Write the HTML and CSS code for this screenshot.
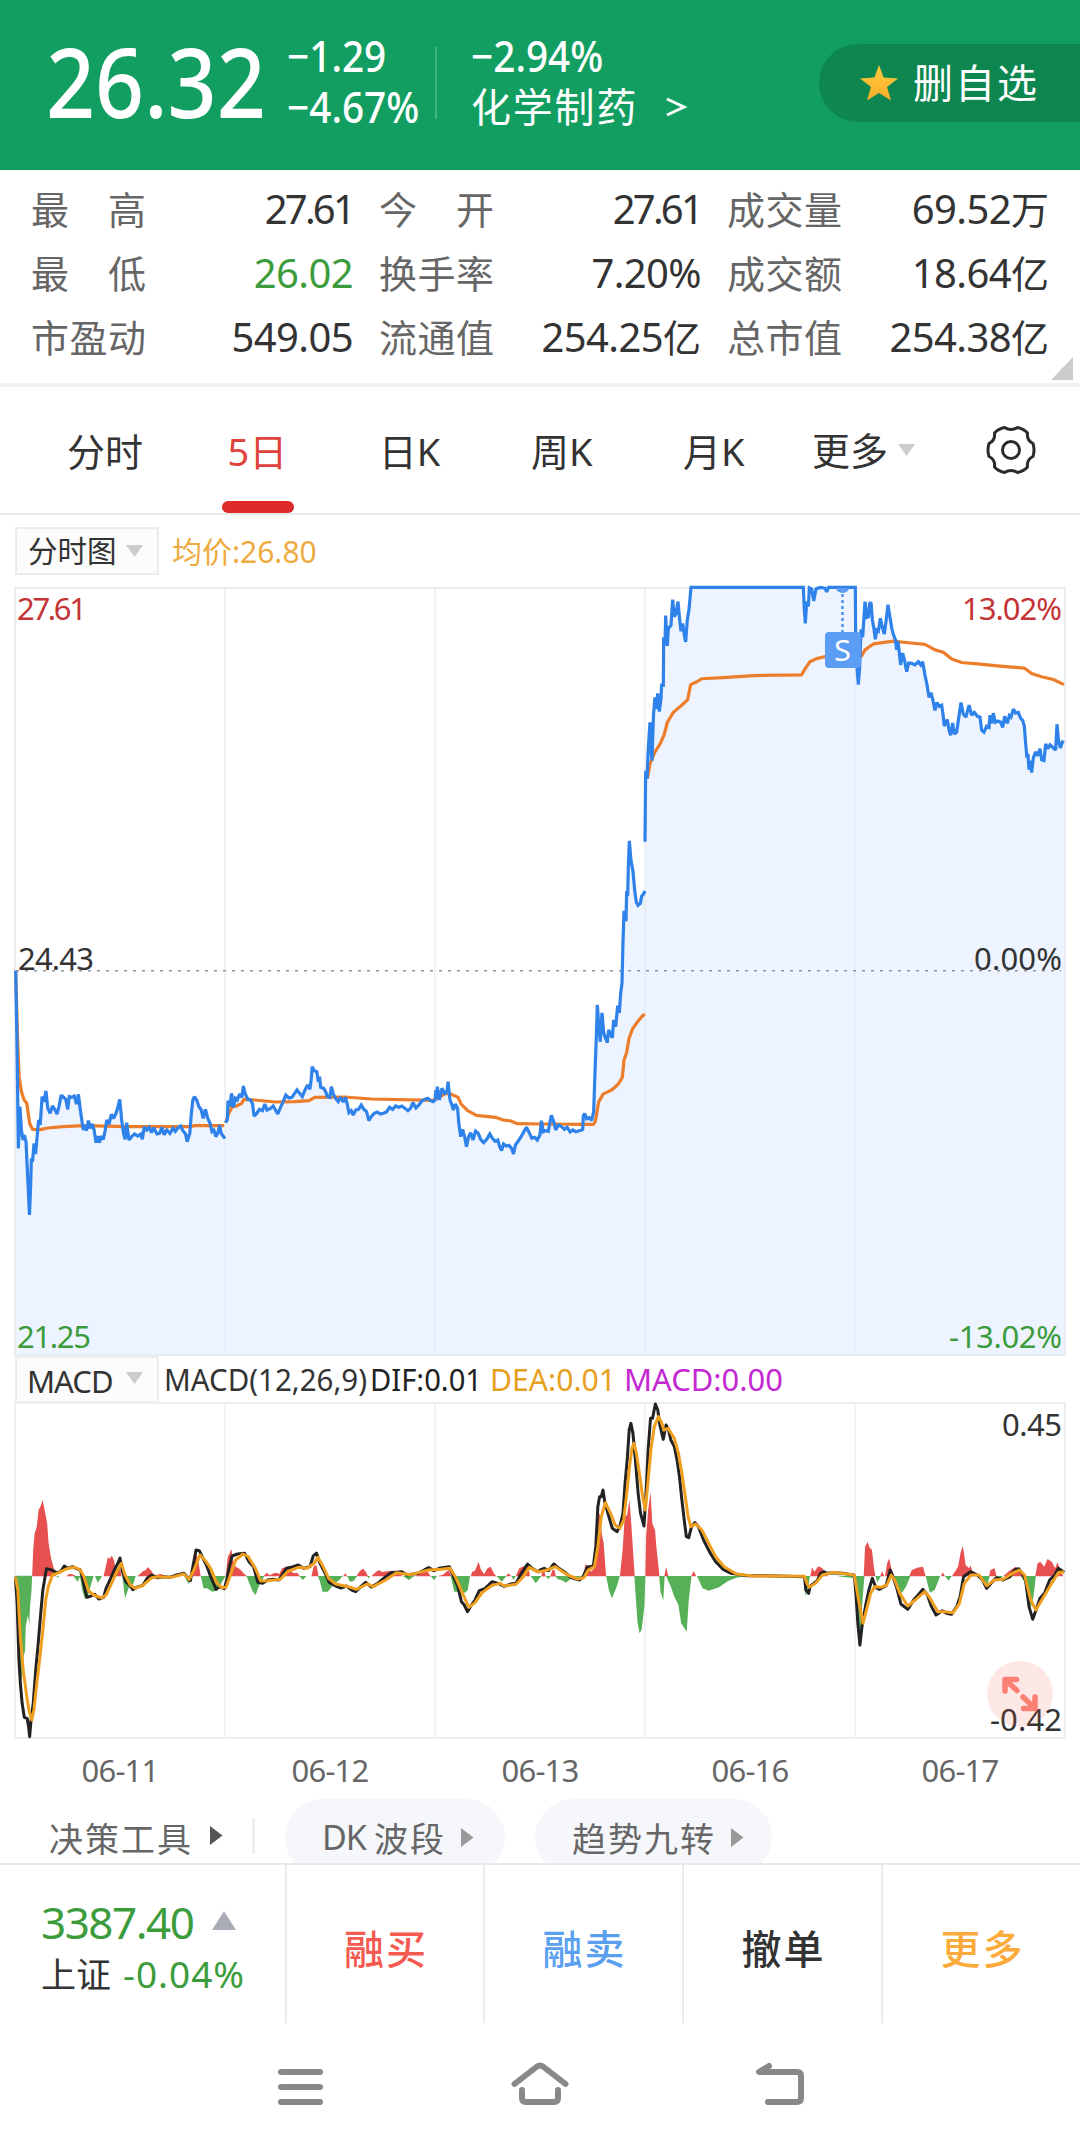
FILE: index.html
```html
<!DOCTYPE html>
<html lang="zh-CN">
<head>
<meta charset="utf-8">
<title>化学制药 5日</title>
<link rel="stylesheet" href="styles.css">
</head>
<body>
<header class="quote">
  <div class="price"><span>26.32</span></div>
  <div class="pair change"><span class="num">−1.29</span><span class="num">−4.67%</span></div>
  <div class="rule"></div>
  <div class="pair sector"><span class="num">−2.94%</span><span class="sector-name">化学制药<svg class="chevron" width="24" height="26" viewBox="0 0 24 26"><path d="M3 5L20 13L3 21" fill="none" stroke="#fff" stroke-width="3"/></svg></span></div>
  <button class="fav"><svg width="40" height="38" viewBox="0 0 40 38"><defs><linearGradient id="gold" x1="0" y1="0" x2="0" y2="1"><stop offset="0" stop-color="#ffcd3d"/><stop offset="1" stop-color="#fbab2c"/></linearGradient></defs><path fill="url(#gold)" d="M20 1L24.6 13.6L39 14.5L28 23L32 36.5L20 29L8 36.5L12 23L1 14.5L15.4 13.6Z"/></svg><span>删自选</span></button>
</header>

<section class="stats">
  <div class="stat"><span class="k"><i>最</i><i>高</i></span><span class="v tight">27.61</span></div>
  <div class="stat"><span class="k"><i>今</i><i>开</i></span><span class="v tight">27.61</span></div>
  <div class="stat"><span class="k"><i>成</i><i>交</i><i>量</i></span><span class="v">69.52<b>万</b></span></div>
  <div class="stat"><span class="k"><i>最</i><i>低</i></span><span class="v down">26.02</span></div>
  <div class="stat"><span class="k"><i>换</i><i>手</i><i>率</i></span><span class="v">7.20%</span></div>
  <div class="stat"><span class="k"><i>成</i><i>交</i><i>额</i></span><span class="v">18.64<b>亿</b></span></div>
  <div class="stat"><span class="k"><i>市</i><i>盈</i><i>动</i></span><span class="v">549.05</span></div>
  <div class="stat"><span class="k"><i>流</i><i>通</i><i>值</i></span><span class="v">254.25<b>亿</b></span></div>
  <div class="stat"><span class="k"><i>总</i><i>市</i><i>值</i></span><span class="v">254.38<b>亿</b></span></div>
  <svg class="corner" width="23" height="23" viewBox="0 0 23 23"><path d="M22 0V23H0Z" fill="#ccc"/></svg>
</section>

<nav class="tabs">
  <a>分时</a><a class="on">5日</a><a>日K</a><a>周K</a><a>月K</a>
  <a class="more">更多<svg width="17" height="12" viewBox="0 0 17 12"><path d="M0 0H17L8.500 12Z" fill="#ccc"/></svg></a>
  <svg class="gear" width="52" height="52" viewBox="-26 -26 52 52" fill="none" stroke="#2b2b2b" stroke-width="3"><circle r="8.500"/><path stroke-linejoin="round" d="M-6.500 -22.500Q0 -18.500 6.500 -22.500Q13 -21 16.500 -17Q15.500 -9.500 22 -6.500Q24 0 22 6.500Q15.500 9.500 16.500 17Q13 21 6.500 22.500Q0 18.500 -6.500 22.500Q-13 21 -16.500 17Q-15.500 9.500 -22 6.500Q-24 0 -22 -6.500Q-15.500 -9.500 -16.500 -17Q-13 -21 -6.500 -22.500Z"/></svg>
</nav>

<div class="legend">
  <span class="select">分时图<svg width="17" height="12" viewBox="0 0 17 12"><path d="M0 0H17L8.500 12Z" fill="#ccc"/></svg></span>
  <span class="avg">均价:26.80</span>
</div>

<svg class="chart" width="1080" height="769" viewBox="0 587 1080 769">
  <g fill="#edf4ff">
    <path transform="translate(0 900) scale(.38265 .33333)" d="M41 1365L41 212L44 400L48 745L52 620L56 690L60 720L64 705L68 725L71 800L74 870L77 945L80 860L82 775L85 785L89 730L93 762L97 710L101 660L105 675L110 590L120 573L125 625L131 640L143 628L149 642L160 585L172 598L177 628L181 590L194 588L200 612L205 583L210 630L218 690L231 662L246 690L251 728L270 718L279 660L291 643L303 640L313 598L323 700L327 718L331 668L337 720L352 702L372 718L377 680L396 698L410 702L423 682L444 700L472 678L489 725L496 700L504 600L508 590L520 620L531 655L537 628L549 670L564 710L574 675L588 716L589 668L594 660L596 602L605 580L610 622L620 600L636 558L648 598L660 612L664 648L678 628L692 612L714 618L726 642L747 585L763 592L776 570L790 590L804 555L810 568L816 500L828 515L838 562L851 575L862 592L866 560L877 595L903 592L912 638L923 645L944 615L958 635L964 662L986 636L1010 636L1034 618L1066 632L1079 608L1111 598L1137 600L1143 560L1148 600L1155 565L1168 575L1171 545L1176 600L1185 630L1196 625L1204 710L1219 740L1230 698L1243 693L1264 728L1280 702L1301 720L1311 752L1330 736L1342 762L1355 722L1376 682L1390 715L1411 705L1415 662L1426 692L1441 646L1452 690L1490 696L1524 690V1365Z"/>
    <path transform="translate(560 570) scale(.33333 .39541)" d="M62 1985V1417L68 1415L74 1375L95 1392L101 1370L109 1180L112 1100L121 1193L126 1120L131 1170L142 1195L157 1183L161 1138L173 1102L186 1045L192 862L198 888L208 685L219 762L229 840L241 843L255 812V687L257 508L261 528L270 385L276 482L281 360L293 312L303 325L310 295L311 170L317 115L322 192L325 148L333 140L338 75L343 118L354 80L363 155L377 182L387 100L393 43H730L736 135L740 80L748 45L761 78L768 48H886L887 160L895 290L903 150L908 170L915 80L933 82L946 175L961 122L973 162L984 88L1002 168L1014 180L1022 240L1088 232L1107 322L1125 355L1145 342L1153 395L1172 418L1190 410L1203 335L1218 372L1227 342L1260 372L1272 410L1290 367L1328 398L1360 352L1388 380L1397 440L1407 505L1415 512L1427 460L1445 480L1457 440L1487 455L1491 390L1501 450L1515 437V1985Z"/>
  </g>
  <g stroke="#e3e6ec" stroke-opacity=".7" fill="none">
    <path d="M225 588V1355M435 588V1355M645 588V1355M855 588V1355" stroke-width="1.500"/>
    <path d="M15 588H1065V1355H15Z" stroke-width="2"/>
  </g>
  <path d="M16 970.700H1061" stroke="#8f959c" stroke-width="1.600" stroke-dasharray="3 6"/>
  <g fill="none" stroke-linejoin="round" stroke-width="3.200">
    <g stroke="#ec7d2a">
      <path vector-effect="non-scaling-stroke" transform="translate(0 900) scale(.38265 .33333)" d="M41 212L46 420L50 530L56 575L63 600L70 610L75 650L78 672L85 688L105 689L125 684L165 680L220 677L330 680L495 680L510 677L586 677M590 668L598 640L606 622L618 618L632 610L637 598L665 600L720 606L770 605L808 602L822 592L900 591L970 597L1137 601M1139 598L1150 590L1165 580L1178 582L1197 592L1205 612L1222 632L1245 646L1295 652L1315 660L1335 663L1352 671L1420 672L1524 673"/>
      <path vector-effect="non-scaling-stroke" transform="translate(560 570) scale(.33333 .39541)" d="M60 1402L100 1402L106 1395L112 1365L116 1345L130 1325L155 1315L175 1300L187 1283L192 1240L200 1220L207 1185L218 1160L235 1140L248 1127L255 1124M262 528L270 490L285 460L300 440L312 418L322 385L340 360L365 342L383 328L392 290L412 282L425 275L490 272L580 267L725 265L735 250L750 232L770 224L800 218M903 220L915 202L940 187L1000 180L1045 184L1095 188L1125 202L1150 208L1175 225L1205 234L1260 238L1320 243L1393 248L1415 262L1445 270L1480 277L1512 290"/>
    </g>
    <g stroke="#2f82ea" stroke-linejoin="miter" stroke-miterlimit="2">
      <path vector-effect="non-scaling-stroke" transform="translate(0 900) scale(.38265 .33333)" d="M41 212L44 400L48 745L52 620L56 690L60 720L64 705L68 725L71 800L74 870L77 945L80 860L82 775L85 785L89 730L93 762L97 710L101 660L105 675L110 590L115 605L120 573L125 625L131 640L137 618L143 628L149 642L154 620L160 585L166 592L172 598L177 628L181 590L187 592L194 588L200 612L205 583L210 630L215 670L218 690L222 675L226 692L231 662L236 685L241 672L246 690L251 728L256 708L260 728L265 708L270 718L275 690L279 660L285 673L291 643L297 655L303 640L308 622L313 598L318 660L323 700L327 718L331 668L337 720L344 710L352 702L360 708L368 702L372 718L377 680L384 690L390 682L396 698L402 683L410 702L417 700L423 682L429 704L436 690L444 700L452 685L458 694L465 684L472 678L478 692L485 702L489 725L496 700L500 640L504 600L508 590L514 600L520 620L526 630L531 655L537 628L543 655L549 670L554 695L559 690L564 710L569 700L574 675L578 700L583 708L588 716M589 668L594 660L596 602L601 620L605 580L610 622L615 595L620 600L626 582L632 592L636 558L641 582L648 598L655 600L660 612L664 648L670 642L678 628L686 632L692 612L698 630L706 626L714 618L720 630L726 642L733 622L740 605L747 585L755 594L763 592L770 580L776 570L783 580L790 590L797 570L804 555L810 568L813 540L816 500L821 512L828 515L832 545L835 530L838 562L846 565L851 575L856 590L862 592L866 560L871 582L877 595L884 605L890 592L897 606L903 592L908 615L912 638L918 632L923 645L930 630L937 628L944 615L951 628L958 635L964 662L970 650L978 640L986 636L994 642L1002 640L1010 636L1018 622L1026 628L1034 618L1042 622L1050 618L1058 625L1066 632L1073 625L1079 608L1087 624L1095 615L1103 602L1111 598L1118 595L1125 602L1132 605L1137 600L1139 570L1141 595L1143 560L1148 600L1155 565L1162 580L1168 575L1171 545L1176 600L1181 615L1185 630L1190 612L1196 625L1199 670L1204 710L1209 688L1214 710L1219 740L1224 712L1230 698L1236 720L1243 693L1250 700L1256 718L1264 728L1272 718L1280 702L1287 715L1294 724L1301 720L1306 740L1311 752L1316 732L1323 738L1330 736L1337 745L1342 762L1347 735L1355 722L1363 708L1369 695L1376 682L1383 698L1390 715L1397 712L1404 720L1411 705L1415 662L1420 695L1426 692L1433 694L1438 662L1441 646L1448 668L1452 690L1460 675L1467 680L1475 688L1482 682L1490 696L1497 690L1505 695L1514 692L1522 690"/>
      <path vector-effect="non-scaling-stroke" transform="translate(560 570) scale(.33333 .39541)" d="M66 1416L68 1415L70 1380L74 1375L80 1388L88 1385L95 1392L101 1370L105 1270L109 1180L112 1100L117 1160L121 1193L126 1120L131 1170L137 1185L142 1195L146 1163L152 1175L157 1183L161 1138L167 1155L173 1102L178 1120L182 1070L186 1045L189 940L192 862L198 888L200 812L203 825L205 750L208 685L213 735L219 762L224 810L229 840L234 848L241 843L245 825L250 820L255 812M255 687L257 508L261 528L265 450L270 385L274 460L276 482L279 400L281 360L285 322L289 352L293 312L298 358L303 325L305 287L310 295L311 170L315 190L317 115L322 192L325 148L333 140L338 75L343 118L348 110L354 80L359 125L363 155L368 135L373 165L377 182L382 125L387 100L393 44L730 44L733 100L736 135L740 80L745 92L748 45L755 48L761 78L768 48L780 44L795 46L800 55L806 44L886 44L887 160L890 235L895 290L899 245L903 150L908 170L915 80L920 120L925 118L929 85L933 82L937 125L942 150L946 175L950 152L955 155L961 122L967 145L973 162L978 130L984 88L990 120L996 150L1002 168L1006 175L1010 202L1014 180L1022 240L1028 210L1034 230L1040 257L1046 235L1055 236L1065 240L1075 232L1082 240L1088 232L1094 262L1101 290L1107 322L1113 310L1119 330L1125 355L1131 335L1138 345L1145 342L1149 365L1153 395L1162 378L1167 405L1172 418L1178 387L1183 415L1190 410L1196 375L1203 335L1210 365L1218 372L1227 342L1235 367L1243 360L1252 370L1260 372L1265 405L1272 410L1280 395L1287 398L1290 367L1295 388L1300 362L1306 385L1314 382L1322 385L1328 398L1334 370L1342 388L1348 368L1353 372L1360 352L1367 362L1375 360L1382 375L1388 380L1393 395L1397 440L1401 475L1404 465L1407 505L1411 482L1415 512L1420 475L1427 460L1433 470L1440 452L1445 480L1452 482L1457 440L1463 452L1470 442L1480 450L1487 455L1491 390L1496 435L1501 450L1507 435L1512 437"/>
    </g>
  </g>
  <path d="M836 588A6.500 5 0 0 0 849 588Z" fill="#5b9cf5"/>
  <path d="M842.500 594V632" stroke="#4c92ef" stroke-width="2.500" stroke-dasharray="3 3"/>
  <rect x="825" y="632" width="36" height="36" rx="4" fill="#5b9cf5"/>
  <text x="834" y="661" font-size="29" textLength="17" lengthAdjust="spacingAndGlyphs" fill="#fff">S</text>
  <g font-size="31">
    <text x="17" y="620" textLength="70" fill="#c43436">27.61</text>
    <text x="962" y="620" textLength="100" fill="#c43436">13.02%</text>
    <text x="18" y="970" textLength="76" fill="#333">24.43</text>
    <text x="974" y="970" textLength="88" fill="#333">0.00%</text>
    <text x="17" y="1347.500" textLength="74" fill="#3c9c3c">21.25</text>
    <text x="949" y="1347.500" textLength="113" fill="#3c9c3c">-13.02%</text>
  </g>
</svg>

<div class="legend indicator">
  <span class="select">MACD<svg width="17" height="12" viewBox="0 0 17 12"><path d="M0 0H17L8.500 12Z" fill="#ccc"/></svg></span>
  <svg width="640" height="46" viewBox="164 1356 640 46" font-size="31">
    <text x="164" y="1391" textLength="203" lengthAdjust="spacingAndGlyphs" fill="#333">MACD(12,26,9)</text>
    <text x="370" y="1391" textLength="112" lengthAdjust="spacingAndGlyphs" fill="#222">DIF:0.01</text>
    <text x="490" y="1391" textLength="126" lengthAdjust="spacingAndGlyphs" fill="#e8a020">DEA:0.01</text>
    <text x="624" y="1391" textLength="159" lengthAdjust="spacingAndGlyphs" fill="#c428d2">MACD:0.00</text>
  </svg>
</div>

<svg class="chart" width="1080" height="337" viewBox="0 1402 1080 337">
  <path d="M225 1403V1738M435 1403V1738M645 1403V1738M855 1403V1738" stroke="#f0f0f0" stroke-width="1.500"/>
  <path d="M15 1403H1065V1738H15Z" stroke="#eee" stroke-width="2" fill="none"/>
  <g transform="translate(0 1350) scale(.35714 .33333)">
    <path fill="#e85050" d="M90 679L93 600L97 550L103 530L108 480L114 468L119 450L126 485L132 520L136 580L143 625L152 660L157 679ZM185 679L195 671L208 675L212 679ZM290 679L296 650L302 622L307 626L313 617L319 630L324 660L336 650L340 679ZM385 679L400 664L408 660L414 651L422 660L432 676L450 672L458 675L464 679ZM485 679L495 671L503 679ZM530 679L538 650L545 600L550 610L556 640L562 679ZM632 679L638 620L643 610L648 597L652 630L660 650L668 655L674 660L684 672L692 679ZM738 679L746 668L756 676L766 670L774 668L782 672L790 655L802 650L812 660L822 670L832 668L840 679ZM872 679L878 650L886 645L892 679ZM960 679L968 670L972 679ZM998 679L1008 662L1017 656L1026 668L1030 679ZM1040 679L1050 668L1060 660L1070 666L1085 664L1100 662L1118 664L1126 679ZM1160 679L1180 669L1196 664L1206 679ZM1225 679L1240 674L1256 660L1264 679ZM1318 679L1322 665L1330 662L1340 635L1347 660L1356 672L1365 655L1374 650L1384 672L1390 679ZM1416 679L1424 670L1432 679ZM1444 679L1454 655L1468 648L1478 645L1484 679ZM1518 679L1523 665L1527 679ZM1542 679L1549 665L1555 679Z"/>
    <path fill="#56b057" d="M44 677H90L88 725L84 770L82 825L78 795L72 830L70 905L66 915L62 980L55 1010L50 850ZM158 678H166L161 683ZM206 678H225L217 695ZM224 678H262L252 715L246 740L238 747L230 720ZM266 678H286L274 698ZM342 678H380L374 700L360 715L350 745L345 700ZM435 678H447L440 688ZM516 678H536L528 703ZM562 678H632L622 695L610 720L595 725L580 715L570 715ZM690 678H740L732 695L724 710L716 735L708 725L700 705ZM838 678H858L848 690ZM890 678H960L950 690L938 700L928 712L918 725L903 725L896 695ZM972 678H1000L990 693L980 695ZM1028 678H1036L1032 686ZM1128 678H1160L1145 690ZM1206 678H1224L1215 690ZM1262 678H1316L1310 720L1302 728L1290 725L1272 725ZM1390 678H1418L1405 695ZM1432 678H1444L1438 690ZM1486 678H1516L1500 700ZM1528 678H1542L1535 688Z"/>
  </g>
  <g transform="translate(540 1350) scale(.34436 .33333)">
    <path fill="#e85050" d="M4 679L10 650L16 679ZM30 679L36 660L42 660L46 679ZM126 679L132 643L140 648L148 665L158 655L163 600L169 500L174 490L180 555L185 580L189 640L192 679ZM232 679L240 600L246 500L253 495L260 450L265 520L270 600L275 679ZM306 679L308 560L314 480L321 425L326 520L334 540L338 590L344 650L347 679ZM361 679L366 651L373 679ZM439 679L446 663L454 679ZM785 679L790 652L797 665L808 649L820 655L828 668L838 679ZM940 679L944 590L951 576L957 592L964 600L970 655L974 679ZM988 679L993 664L1000 679ZM1002 679L1008 640L1014 625L1020 655L1028 679ZM1072 679L1080 660L1095 653L1112 650L1120 679ZM1164 679L1170 667L1176 679ZM1196 679L1206 664L1214 650L1222 605L1228 588L1236 645L1246 655L1250 646L1256 665L1272 674L1280 679ZM1304 679L1308 660L1320 655L1326 679ZM1345 679L1355 670L1366 660L1382 650L1395 665L1405 679ZM1438 679L1445 640L1453 635L1464 650L1474 627L1486 635L1496 655L1503 637L1512 665L1520 679Z"/>
    <path fill="#56b057" d="M44 678H118L108 688L90 685L76 698L62 690L52 688ZM192 678H232L222 712L209 745L200 720ZM274 678H306L303 770L295 840L289 850L283 815ZM346 678H362L358 752L350 725ZM366 678H440L432 750L426 845L410 820L402 765L390 740L380 710ZM456 678H600L570 683L545 694L520 712L490 722L472 715ZM768 678H784L778 715L771 740ZM860 677H915L912 684L880 681ZM916 678H942L936 760L928 893L920 780ZM974 678H990L980 697ZM1028 678H1076L1062 712L1050 730L1038 708ZM1120 678H1162L1154 700L1146 720L1132 728ZM1176 678H1196L1186 692ZM1276 678H1306L1296 715ZM1326 678H1344L1334 690ZM1396 678H1440L1433 740L1425 775L1415 710Z"/>
  </g>
  <g fill="none" stroke-linejoin="round" stroke-width="3">
    <g stroke="#222">
      <path vector-effect="non-scaling-stroke" transform="translate(0 1350) scale(.35714 .33333)" d="M43 680L48 760L53 930L57 1000L62 1060L68 1102L76 1105L80 1130L83 1160L87 1110L93 1060L100 960L107 880L114 790L120 720L130 656L145 660L158 668L170 665L180 648L190 655L203 650L213 655L225 660L232 690L243 742L255 738L265 733L277 747L290 742L297 715L308 690L320 660L330 640L336 624L343 665L352 695L363 705L372 719L385 711L400 706L412 685L425 675L440 683L460 680L475 682L495 675L515 670L533 692L540 650L549 600L558 602L566 620L578 645L590 680L605 718L615 710L628 716L635 690L642 650L650 618L665 612L685 610L697 635L710 650L722 697L735 700L750 690L765 688L780 690L790 675L802 655L815 652L835 645L850 655L868 650L877 618L886 609L896 640L908 665L922 697L940 708L955 714L970 708L985 720L996 725L1010 710L1024 697L1040 711L1060 698L1080 680L1095 668L1125 665L1140 675L1170 670L1185 662L1200 653L1215 662L1230 655L1258 650L1270 680L1282 710L1292 755L1300 765L1309 785L1320 765L1330 750L1342 722L1358 716L1378 695L1395 700L1412 709L1430 702L1445 700L1460 670L1477 642L1490 655L1505 665L1514 660"/>
      <path vector-effect="non-scaling-stroke" transform="translate(540 1350) scale(.34436 .33333)" d="M0 660L12 655L25 662L40 642L55 655L70 665L90 683L115 690L126 678L137 652L155 648L162 590L168 470L173 440L178 440L183 420L188 455L200 500L210 535L224 545L233 525L241 490L247 400L254 320L259 240L264 220L270 250L277 330L285 430L292 490L302 528L308 430L314 300L321 205L327 205L335 162L342 180L348 225L358 268L366 225L373 238L380 270L390 290L398 330L405 380L412 450L420 520L425 560L432 563L440 530L450 518L460 530L475 570L492 605L510 635L532 658L555 670L600 677L690 678L768 680L772 720L780 730L785 708L795 700L805 692L815 670L825 665L833 670L850 668L880 670L913 676L918 740L923 820L929 885L935 830L945 770L955 720L965 685L975 712L985 718L1005 707L1012 680L1017 660L1025 680L1035 710L1048 762L1068 778L1085 750L1098 735L1112 718L1125 735L1137 770L1150 795L1168 782L1180 790L1195 793L1210 770L1220 740L1230 680L1250 665L1270 675L1285 690L1297 715L1310 700L1325 683L1345 690L1365 680L1378 660L1390 656L1400 670L1410 690L1420 770L1431 808L1442 775L1452 745L1465 730L1480 690L1495 675L1505 655L1522 667"/>
    </g>
    <g stroke="#ef9f1f">
      <path vector-effect="non-scaling-stroke" transform="translate(0 1350) scale(.35714 .33333)" d="M43 680L50 720L57 860L65 960L75 1040L82 1085L89 1110L95 1080L103 1000L112 920L120 840L128 750L135 710L147 675L165 668L185 657L208 651L225 660L235 680L248 722L262 735L285 744L297 735L308 710L325 670L340 640L350 675L365 705L378 715L400 706L425 683L440 680L480 682L515 672L530 688L543 660L560 615L575 632L590 655L605 695L620 713L633 712L645 675L660 630L680 612L695 620L715 655L730 693L750 692L785 688L805 665L835 652L860 655L880 640L890 622L905 650L920 685L940 702L975 710L998 718L1028 702L1045 710L1080 690L1110 668L1150 674L1200 660L1235 658L1260 655L1275 680L1295 730L1313 772L1330 758L1350 728L1378 706L1400 700L1412 708L1445 703L1465 680L1482 652L1505 665L1514 665"/>
      <path vector-effect="non-scaling-stroke" transform="translate(540 1350) scale(.34436 .33333)" d="M0 665L20 660L45 650L80 675L110 687L127 683L140 660L158 650L168 590L178 500L190 458L205 490L218 525L232 535L243 510L252 430L260 350L267 295L273 280L280 310L290 380L298 440L306 480L315 380L323 290L332 230L344 200L352 215L360 240L372 235L390 265L402 310L412 370L422 440L430 500L438 530L452 522L470 540L490 580L510 620L535 650L570 672L620 678L768 679L775 700L782 712L800 700L820 675L850 667L913 675L925 750L938 820L948 780L960 730L972 710L990 712L1007 705L1020 675L1030 690L1045 730L1068 768L1090 750L1117 725L1130 740L1155 785L1175 785L1200 788L1218 760L1232 700L1252 675L1275 675L1297 707L1320 690L1345 688L1375 668L1392 660L1407 675L1425 750L1440 780L1460 745L1480 710L1505 668L1522 665"/>
    </g>
  </g>
  <g font-size="31" fill="#333">
    <text x="1002" y="1436" textLength="60">0.45</text>
    <text x="990" y="1731" textLength="72">-0.42</text>
  </g>
  <circle cx="1020" cy="1694" r="33" fill="#fb5a50" fill-opacity=".14"/>
  <g fill="none" stroke="#fb8074" stroke-width="5.500" stroke-linecap="round" stroke-linejoin="round"><path d="M1005 1691V1679.500H1016.500M1006 1680.500L1017 1690.500M1035 1697V1708.500H1023.500M1034 1707.500L1023 1697"/></g>
</svg>

<div class="dates"><span>06-11</span><span>06-12</span><span>06-13</span><span>06-16</span><span>06-17</span></div>

<div class="tools">
  <span class="tool lead">决策工具<svg width="13" height="19" viewBox="0 0 13 19"><path d="M0 0L12.500 9.500L0 19Z" fill="#555"/></svg></span>
  <span class="tick"></span>
  <span class="tool pill dk"><em>DK</em>波段<svg width="13" height="19" viewBox="0 0 13 19"><path d="M0 0L12.500 9.500L0 19Z" fill="#999"/></svg></span>
  <span class="tool pill">趋势九转<svg width="13" height="19" viewBox="0 0 13 19"><path d="M0 0L12.500 9.500L0 19Z" fill="#999"/></svg></span>
</div>

<footer class="actions">
  <div class="index">
    <div class="index-value">3387.40<svg width="24" height="19" viewBox="0 0 24 19"><path d="M12 0L24 19H0Z" fill="#a9adb5"/></svg></div>
    <div class="index-name">上证<span>-0.04%</span></div>
  </div>
  <a class="buy">融买</a><a class="sell">融卖</a><a>撤单</a><a class="extra">更多</a>
</footer>

<div class="sysnav">
  <svg width="1080" height="125" viewBox="0 2023 1080 125" fill="none" stroke="#888" stroke-width="6" stroke-linecap="round" stroke-linejoin="round">
    <path d="M281 2072H320M281 2087H320M281 2102H320"/>
    <path d="M514.500 2084L537 2066.500Q540 2064.500 543 2066.500L565.500 2084M522 2090V2098Q522 2102 526 2102H554Q558 2102 558 2098V2090"/>
    <path d="M769 2066L759 2072H797Q801 2072 801 2076V2098Q801 2102 797 2102H768"/>
  </svg>
</div>
</body>
</html>
```
FILE: styles.css
```css
* { box-sizing: border-box; }
body {
  margin: 0;
  width: 1080px;
  height: 2148px;
  overflow: hidden;
  background: #fff;
  color: #333;
  font-family: "Noto Sans", "Noto Sans CJK SC", sans-serif;
}
svg { display: block; flex: none; overflow: visible; }
i, em { font-style: normal; }
b { font-weight: 400; }

.quote {
  height: 170px;
  background: #119e60;
  color: #fff;
  display: flex;
  align-items: flex-start;
}
.price {
  width: 241px;
  margin-left: 46px;
  padding-top: 29px;
  font-size: 97px;
  line-height: 102px;
  font-weight: 500;
}
.price span {
  display: inline-block;
  transform: scaleX(.885);
  transform-origin: 0 50%;
}
.pair {
  display: flex;
  flex-direction: column;
  align-items: flex-start;
  padding-top: 31px;
  font-size: 43px;
  line-height: 50.500px;
  white-space: nowrap;
}
.num {
  transform: scaleX(.9);
  transform-origin: 0 50%;
}
.change { width: 148px; }
.change, .sector { font-weight: 500; }
.rule {
  width: 2px;
  height: 72px;
  margin-top: 47px;
  background: #3fb27f;
}
.sector { width: 382px; padding-left: 34px; }
.sector-name {
  display: flex;
  align-items: center;
  font-size: 40px;
  font-weight: 400;
  letter-spacing: 1.800px;
}
.chevron { margin-left: 26px; }
.fav {
  width: 261px;
  height: 78px;
  margin: 44px 0 0;
  padding: 0 0 0 40px;
  border: 0;
  border-radius: 39px 0 0 39px;
  background: #0e8650;
  color: #fff;
  font: 400 40px/74px "Noto Sans CJK SC", sans-serif;
  letter-spacing: 2px;
  display: flex;
  align-items: center;
  gap: 14px;
}
.fav span { height: 78px; }

.stats {
  position: relative;
  height: 217px;
  padding: 7px 31px 0;
  border-bottom: 4px solid #f1f1f1;
  display: grid;
  grid-template-columns: repeat(3, 322px);
  grid-auto-rows: 64px;
  column-gap: 26px;
}
.stat {
  display: flex;
  justify-content: space-between;
  align-items: center;
  line-height: 64px;
}
.k {
  width: 115px;
  display: flex;
  justify-content: space-between;
  font-size: 38px;
  color: #666;
}
.v { font-size: 40px; letter-spacing: -.6px; color: #333; }
.v b { font-size: 38px; letter-spacing: 0; }
.tight { letter-spacing: -2.800px; }
.down { color: #3c9c3c; }
.corner { position: absolute; right: 6px; bottom: 3px; }

.tabs {
  height: 128px;
  padding-left: 29px;
  border-bottom: 2px solid #e9e9e9;
  display: grid;
  grid-template-columns: repeat(5, 152.200px) 195px 1fr;
  font-size: 38px;
  line-height: 128px;
}
.tabs a { text-align: center; position: relative; height: 126px; }
.tabs .on { color: #e0433c; }
.tabs .on::after {
  content: "";
  position: absolute;
  left: 41px;
  bottom: 0;
  width: 72px;
  height: 12px;
  border-radius: 6px;
  background: #e02a2a;
}
.tabs .more {
  display: flex;
  align-items: center;
  gap: 10px;
  padding-left: 22px;
}
.gear { margin-top: 37px; }

.legend {
  height: 72px;
  padding: 12px 0 0 15px;
  display: flex;
  align-items: flex-start;
}
.select {
  width: 144px;
  height: 48px;
  padding: 0 14px 0 11px;
  border: 2px solid #ececec;
  background: #fcfcfc;
  display: flex;
  align-items: center;
  justify-content: space-between;
  font-size: 29.500px;
  line-height: 46px;
}
.avg {
  margin-left: 13px;
  font-size: 30px;
  line-height: 49px;
  color: #eeab40;
}
.indicator { height: 46px; padding-top: 0; }
.indicator .select {
  height: 47px;
  padding-left: 10px;
  padding-top: 3px;
  font-size: 31px;
  letter-spacing: -1px;
}
.indicator .select svg { margin-top: -6px; }
.indicator > svg { margin-left: 5px; }

.dates {
  height: 60px;
  padding: 0 15px;
  display: grid;
  grid-template-columns: repeat(5, 210px);
  text-align: center;
  font-size: 31px;
  line-height: 62px;
  letter-spacing: -.8px;
  color: #666;
}

.tools {
  height: 66px;
  overflow: hidden;
  border-bottom: 2px solid #e9e9e9;
  display: flex;
  align-items: flex-start;
  color: #666;
  font-size: 34px;
  letter-spacing: 2px;
}
.tool {
  display: flex;
  align-items: center;
  flex: none;
  height: 76px;
  gap: 15px;
  white-space: nowrap;
}
.lead { width: 252px; padding-left: 49px; gap: 17px; }
.lead svg { margin-top: -3px; }
.tick { width: 3px; height: 36px; margin: 19px 30px 0 0; background: #efefef; }
.pill {
  width: 237px;
  padding-left: 37px;
  border-radius: 38px;
  background: #f5f7fb;
}
.dk { width: 220px; margin-right: 30px; }
.dk em { width: 37px; letter-spacing: -1px; }

.actions {
  height: 158px;
  display: grid;
  grid-template-columns: 285px 198px 199px 199px 199px;
}
.actions a {
  height: 158px;
  border-left: 2px solid #ebebeb;
  text-align: center;
  font-size: 40px;
  font-weight: 500;
  line-height: 167px;
  letter-spacing: 2px;
  padding-left: 2px;
}
.actions .buy { color: #f35a50; }
.actions .sell { color: #5b9fef; }
.actions .extra { color: #fbab3c; }
.index { padding: 28px 0 0 41px; }
.index-value {
  display: flex;
  align-items: center;
  gap: 19px;
  height: 58px;
  font-size: 44px;
  letter-spacing: -1.500px;
  color: #3c9c3c;
}
.index-value svg { margin-top: -3px; }
.index-name {
  display: flex;
  align-items: baseline;
  gap: 12px;
  font-size: 35px;
  line-height: 46px;
  white-space: nowrap;
}
.index-name span { font-size: 37px; letter-spacing: 1px; color: #3c9c3c; }
```
